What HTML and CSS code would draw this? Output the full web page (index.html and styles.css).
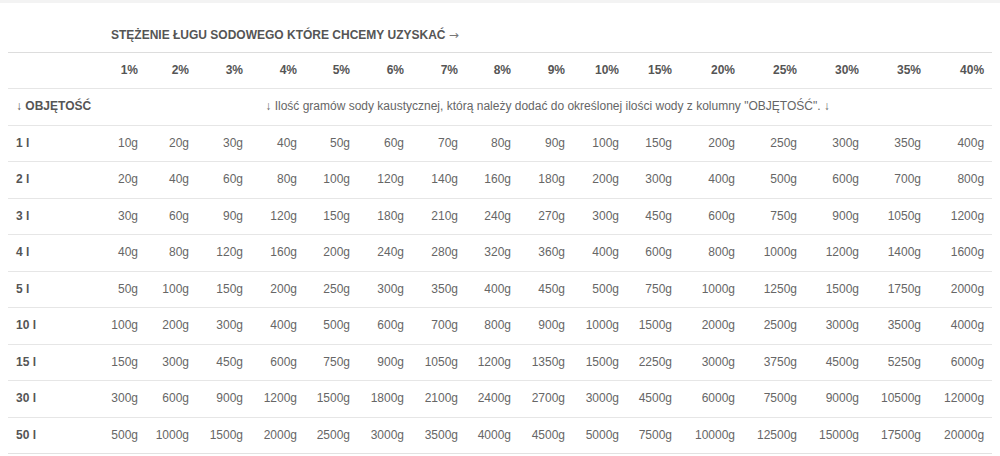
FILE: index.html
```html
<!DOCTYPE html>
<html lang="pl">
<head>
<meta charset="utf-8">
<title>Tabela ługu sodowego</title>
<link rel="stylesheet" href="styles.css">
</head>
<body>
<div class="topbar"></div>
<table class="lye">
  <colgroup>
    <col class="c-label"><col class="c-a"><col class="c-b"><col class="c-c"><col class="c-c"><col class="c-d"><col class="c-c"><col class="c-c"><col class="c-d"><col class="c-c"><col class="c-c"><col class="c-d"><col class="c-e"><col class="c-f"><col class="c-f"><col class="c-f"><col class="c-e">
  </colgroup>
  <thead>
    <tr class="title-row">
      <th></th>
      <th class="title" colspan="16">STĘŻENIE ŁUGU SODOWEGO KTÓRE CHCEMY UZYSKAĆ <span class="arrow">→</span></th>
    </tr>
    <tr class="pct-row">
      <th></th>
      <th>1%</th><th>2%</th><th>3%</th><th>4%</th><th>5%</th><th>6%</th><th>7%</th><th>8%</th><th>9%</th><th>10%</th><th>15%</th><th>20%</th><th>25%</th><th>30%</th><th>35%</th><th>40%</th>
    </tr>
  </thead>
  <tbody>
    <tr>
      <th class="label">↓ OBJĘTOŚĆ</th>
      <td class="note" colspan="16">↓ Ilość gramów sody kaustycznej, którą należy dodać do określonej ilości wody z kolumny "OBJĘTOŚĆ". ↓</td>
    </tr>
    <tr><th class="label">1 l</th><td>10g</td><td>20g</td><td>30g</td><td>40g</td><td>50g</td><td>60g</td><td>70g</td><td>80g</td><td>90g</td><td>100g</td><td>150g</td><td>200g</td><td>250g</td><td>300g</td><td>350g</td><td>400g</td></tr>
    <tr><th class="label">2 l</th><td>20g</td><td>40g</td><td>60g</td><td>80g</td><td>100g</td><td>120g</td><td>140g</td><td>160g</td><td>180g</td><td>200g</td><td>300g</td><td>400g</td><td>500g</td><td>600g</td><td>700g</td><td>800g</td></tr>
    <tr><th class="label">3 l</th><td>30g</td><td>60g</td><td>90g</td><td>120g</td><td>150g</td><td>180g</td><td>210g</td><td>240g</td><td>270g</td><td>300g</td><td>450g</td><td>600g</td><td>750g</td><td>900g</td><td>1050g</td><td>1200g</td></tr>
    <tr><th class="label">4 l</th><td>40g</td><td>80g</td><td>120g</td><td>160g</td><td>200g</td><td>240g</td><td>280g</td><td>320g</td><td>360g</td><td>400g</td><td>600g</td><td>800g</td><td>1000g</td><td>1200g</td><td>1400g</td><td>1600g</td></tr>
    <tr><th class="label">5 l</th><td>50g</td><td>100g</td><td>150g</td><td>200g</td><td>250g</td><td>300g</td><td>350g</td><td>400g</td><td>450g</td><td>500g</td><td>750g</td><td>1000g</td><td>1250g</td><td>1500g</td><td>1750g</td><td>2000g</td></tr>
    <tr><th class="label">10 l</th><td>100g</td><td>200g</td><td>300g</td><td>400g</td><td>500g</td><td>600g</td><td>700g</td><td>800g</td><td>900g</td><td>1000g</td><td>1500g</td><td>2000g</td><td>2500g</td><td>3000g</td><td>3500g</td><td>4000g</td></tr>
    <tr><th class="label">15 l</th><td>150g</td><td>300g</td><td>450g</td><td>600g</td><td>750g</td><td>900g</td><td>1050g</td><td>1200g</td><td>1350g</td><td>1500g</td><td>2250g</td><td>3000g</td><td>3750g</td><td>4500g</td><td>5250g</td><td>6000g</td></tr>
    <tr><th class="label">30 l</th><td>300g</td><td>600g</td><td>900g</td><td>1200g</td><td>1500g</td><td>1800g</td><td>2100g</td><td>2400g</td><td>2700g</td><td>3000g</td><td>4500g</td><td>6000g</td><td>7500g</td><td>9000g</td><td>10500g</td><td>12000g</td></tr>
    <tr><th class="label">50 l</th><td>500g</td><td>1000g</td><td>1500g</td><td>2000g</td><td>2500g</td><td>3000g</td><td>3500g</td><td>4000g</td><td>4500g</td><td>5000g</td><td>7500g</td><td>10000g</td><td>12500g</td><td>15000g</td><td>17500g</td><td>20000g</td></tr>
  </tbody>
</table>
</body>
</html>
```

FILE: styles.css
```css
html, body {
  margin: 0;
  padding: 0;
  background: #ffffff;
}
body {
  font-family: "Liberation Sans", Arial, sans-serif;
  font-size: 12px;
  color: #666666;
}
.topbar {
  height: 3px;
  background: #f3f3f3;
}
.lye {
  margin: 0 8px;
  width: 984px;
  table-layout: fixed;
  border-collapse: collapse;
  border-bottom: 1px solid #e2e2e2;
}
.c-label { width: 95px; }
.c-a { width: 43px; }
.c-b { width: 51px; }
.c-c { width: 54px; }
.c-d { width: 53px; }
.c-e { width: 63px; }
.c-f { width: 62px; }

.lye th,
.lye td {
  padding: 8px;
  line-height: 19.5px;
  text-align: right;
  white-space: nowrap;
  border-top: 1px solid #e6e6e6;
  vertical-align: middle;
}
.lye th {
  font-weight: bold;
  color: #555555;
}
.title-row th {
  border-top: none;
  vertical-align: bottom;
  padding-bottom: 7px;
  height: 34px;
  text-align: left;
}
.title .arrow {
  font-family: "DejaVu Sans", sans-serif;
  font-weight: normal;
  font-size: 12px;
  color: #777777;
}
.pct-row th {
  border-top: 1px solid #dddddd;
  line-height: 19px;
}
.lye th.label {
  text-align: left;
}
.lye td.note {
  text-align: center;
  color: #666666;
}
```
